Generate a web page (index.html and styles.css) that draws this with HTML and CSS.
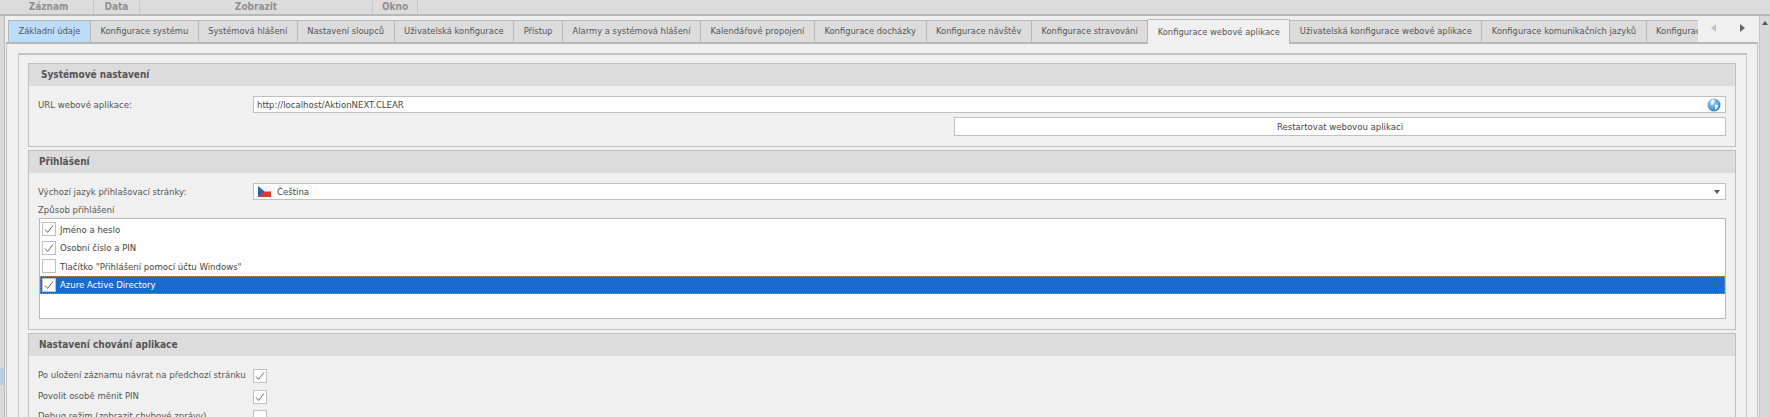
FILE: index.html
```html
<!doctype html>
<html lang="cs">
<head>
  <meta charset="utf-8">
  <title>Konfigurace webové aplikace</title>
  <link rel="stylesheet" href="styles.css">
</head>

<body>

<svg class="defs" width="0" height="0">
  <symbol id="tick" viewBox="0 0 14 14">
    <polyline points="3,7.5 5.6,10.4 11,3.4" fill="none" stroke="#666" stroke-width="1"/>
  </symbol>
  <radialGradient id="sphere" cx="40%" cy="30%" r="75%">
    <stop offset="0" stop-color="#a8d8f8"/>
    <stop offset="1" stop-color="#1f78d0"/>
  </radialGradient>
</svg>

<div id="menu">
  <div class="group-name w-record">Záznam</div>
  <div class="group-name w-data">Data</div>
  <div class="group-name w-view">Zobrazit</div>
  <div class="group-name w-window">Okno</div>
</div>

<div id="main">
  <div id="workspace">

    <div id="tabbar">
      <div id="tabs">
        <div class="tab first">Základní údaje</div>
        <div class="tab">Konfigurace systému</div>
        <div class="tab">Systémová hlášení</div>
        <div class="tab">Nastavení sloupců</div>
        <div class="tab">Uživatelská konfigurace</div>
        <div class="tab">Přístup</div>
        <div class="tab">Alarmy a systémová hlášení</div>
        <div class="tab">Kalendářové propojení</div>
        <div class="tab">Konfigurace docházky</div>
        <div class="tab">Konfigurace návštěv</div>
        <div class="tab">Konfigurace stravování</div>
        <div class="tab active">Konfigurace webové aplikace</div>
        <div class="tab">Uživatelská konfigurace webové aplikace</div>
        <div class="tab">Konfigurace komunikačních jazyků</div>
        <div class="tab">Konfigurace</div>
      </div>
      <div id="tabnav">
        <span class="nav-left"></span>
        <span class="nav-right"></span>
      </div>
    </div>

    <div id="pane">
      <div id="inner">

        <div class="section">
          <h3 class="section-title">Systémové nastavení</h3>
          <div class="section-body">
            <div class="field">
              <span class="label">URL webové aplikace:</span>
              <div class="input">
                <span>http://localhost/AktionNEXT.CLEAR</span>
                <svg class="globe" width="14" height="14" viewBox="0 0 14 14">
                  <circle cx="7" cy="7" r="6.5" fill="url(#sphere)"/>
                  <path d="M6 1.2 C8 1.6 8.4 3 7 4 C6 4.8 6.8 6 5.6 6.8 C4.6 7.4 3.6 6 3.6 4.4 C3.6 3 4.6 1.8 6 1.2 Z" fill="#e8f5fd"/>
                  <path d="M9 6.6 C10.6 6.4 11.6 7.4 10.8 9 C10.2 10.4 8.8 12 8 11.6 C7.6 10.4 8.6 9.6 8 8.4 C7.8 7.6 8.2 6.8 9 6.6 Z" fill="#e8f5fd"/>
                </svg>
              </div>
            </div>
            <div class="actions">
              <div class="button">Restartovat webovou aplikaci</div>
            </div>
          </div>
        </div>

        <div class="section">
          <h3 class="section-title">Přihlášení</h3>
          <div class="section-body">
            <div class="field">
              <span class="label">Výchozí jazyk přihlašovací stránky:</span>
              <div class="input">
                <svg class="flag" width="13" height="11" viewBox="0 0 13 11">
                  <rect width="13" height="5.5" fill="#f4f4f8"/>
                  <rect y="5.5" width="13" height="5.5" fill="#e2382c"/>
                  <polygon points="0,0 6.5,5.5 0,11" fill="#2a62b4"/>
                </svg>
                <span class="combo-text">Čeština</span>
                <span class="combo-arrow"></span>
              </div>
            </div>
            <div class="list-label">Způsob přihlášení</div>
            <div class="list">
              <div class="list-row"><span class="check"><svg width="14" height="14"><use href="#tick"/></svg></span>Jméno a heslo</div>
              <div class="list-row"><span class="check"><svg width="14" height="14"><use href="#tick"/></svg></span>Osobní číslo a PIN</div>
              <div class="list-row"><span class="check"></span>Tlačítko "Přihlášení pomocí účtu Windows"</div>
              <div class="list-row selected"><span class="check"><svg width="14" height="14"><use href="#tick"/></svg></span>Azure Active Directory</div>
            </div>
          </div>
        </div>

        <div class="section">
          <h3 class="section-title">Nastavení chování aplikace</h3>
          <div class="section-body options">
            <div class="field option"><span class="label">Po uložení záznamu návrat na předchozí stránku</span><span class="check"><svg width="14" height="14"><use href="#tick"/></svg></span></div>
            <div class="field option"><span class="label">Povolit osobě měnit PIN</span><span class="check"><svg width="14" height="14"><use href="#tick"/></svg></span></div>
            <div class="field option"><span class="label">Debug režim (zobrazit chybové zprávy)</span><span class="check"></span></div>
          </div>
        </div>

      </div><!-- /#inner -->
    </div>

  </div><!-- /#workspace -->

  <div id="scrollbar"><span class="scroll-up"></span></div>
</div>

<div id="side-mark"></div>

</body>
</html>
```

FILE: styles.css
```css
html {
  box-sizing: border-box;
}
*, *:before, *:after {
  box-sizing: inherit;
}

body {
  margin: 0;
  padding: 0;
  height: 417px;
  overflow: hidden;
  background-color: #dadada;
  font-family: 'DejaVu Sans', sans-serif;
  font-stretch: condensed;
  font-size: 9.5px;
  color: #555;
}

.defs {
  position: absolute;
}

/* top ribbon captions */

#menu {
  display: flex;
  height: 16px;
  padding-left: 4px;
  background-color: #dcdcdc;
  border-bottom: 2px solid #b8b8b8;
}

.group-name {
  height: 14px;
  line-height: 13px;
  text-align: center;
  font-size: 10px;
  font-weight: 700;
  color: #909090;
  border-right: 1px solid #c8c8c8;
}

.w-record { width: 90px; }
.w-data { width: 46px; }
.w-view { width: 233px; }
.w-window { width: 45px; }

#main {
  display: flex;
  height: 401px;
}

#workspace {
  width: 1756px;
  margin-left: 4px;
  border-left: 1px solid #bcbcbc;
  border-right: 1px solid #c4c4c4;
  background-color: #f0f0f0;
  display: flex;
  flex-direction: column;
}

/* tabs */

#tabbar {
  display: flex;
  height: 28px;
  flex-shrink: 0;
  margin-left: 1px;
  margin-right: 1px;
}

#tabs {
  display: flex;
  align-items: flex-end;
  width: 1692px;
  overflow: hidden;
}

#tabs::before {
  content: "";
  flex-shrink: 0;
  width: 2px;
  height: 2px;
  background-color: #b8b8b8;
}

.tab {
  flex-shrink: 0;
  height: 24px;
  line-height: 20px;
  padding: 0 9.5px;
  font-size: 9.3px;
  white-space: nowrap;
  background-color: #dcdcdc;
  border: 1px solid #b8b8b8;
  border-left: 0;
  border-bottom-width: 2px;
}

.tab.first {
  background-color: #bcdcfa;
  border-left: 1px solid #b8b8b8;
}

.tab.active {
  height: 25px;
  line-height: 23px;
  background-color: #f0f0f0;
  border-bottom: 0;
}

#tabnav {
  display: flex;
  flex: 1;
  align-items: center;
  padding-left: 13px;
  padding-bottom: 2px;
  gap: 24px;
  border-bottom: 2px solid #b8b8b8;
}

.nav-left {
  border: 4px solid transparent;
  border-left: 0;
  border-right: 5px solid #c4c4c4;
}

.nav-right {
  border: 4px solid transparent;
  border-right: 0;
  border-left: 5px solid #666;
}

/* panes */

#pane {
  flex: 1;
  min-height: 0;
  margin-left: 1px;
  margin-right: 1px;
  padding: 9px 10px 0 11px;
  border-left: 1px solid #c4c4c4;
  border-right: 1px solid #c4c4c4;
}

#inner {
  height: 100%;
  padding: 8px 10px 0 9px;
  border-top: 2px solid #c4c4c4;
  border-left: 1px solid #c8c8c8;
  border-right: 1px solid #c8c8c8;
  display: flex;
  flex-direction: column;
  gap: 3px;
}

.section {
  flex-shrink: 0;
  border: 1px solid #c0c0c0;
}

.section-title {
  margin: 0;
  height: 22px;
  line-height: 22px;
  padding-left: 10px;
  font-size: 10px;
  font-weight: 700;
  color: #555;
  background-color: #dcdcdc;
}

.section:first-child .section-title {
  padding-left: 12px;
}

.section-body {
  padding: 10px 9px 10px 9px;
}

.field {
  display: grid;
  grid-template-columns: 215px 1fr;
  align-items: center;
}

.label {
  white-space: nowrap;
}

.input {
  display: flex;
  align-items: center;
  height: 17px;
  padding: 0 3px;
  color: #444;
  background-color: #fff;
  border: 1px solid #c0c0c0;
}

.globe {
  margin-left: auto;
  margin-right: 1px;
}

.flag {
  margin-left: 1px;
}

.combo-text {
  margin-left: 6px;
}

.combo-arrow {
  margin-left: auto;
  margin-right: 2px;
  border: 3px solid transparent;
  border-top: 4px solid #555;
  border-bottom: 0;
}

.actions {
  display: flex;
  justify-content: flex-end;
  margin-top: 4px;
}

.button {
  width: 772px;
  height: 19px;
  line-height: 17px;
  text-align: center;
  color: #444;
  background-color: #fff;
  border: 1px solid #c0c0c0;
}

.list-label {
  margin-top: 2px;
  height: 15px;
  line-height: 15px;
}

.list {
  height: 101px;
  margin-top: 1px;
  margin-left: 1px;
  padding-top: 1px;
  background-color: #fff;
  border: 1px solid #b8b8b8;
}

.list-row {
  display: flex;
  align-items: center;
  height: 18.5px;
  color: #444;
}

.list-row .check {
  margin-left: 2px;
  margin-right: 4px;
}

.list-row.selected {
  color: #fff;
  background-color: #1a6bd0;
  outline: 1px dotted #b09060;
  outline-offset: -1px;
}

.check {
  display: block;
  flex-shrink: 0;
  width: 14px;
  height: 14px;
  background-color: #fff;
  border: 1px solid #c0c0c0;
}

.check svg {
  display: block;
  margin: -1px;
}

.options {
  padding-top: 13px;
}

.option {
  height: 20.5px;
  align-items: flex-start;
}

/* scroll */

#scrollbar {
  flex: 1;
  background-color: #d8d8d8;
  display: flex;
  justify-content: center;
}

.scroll-up {
  margin-top: 5px;
  height: 0;
  border: 3px solid transparent;
  border-top: 0;
  border-bottom: 4px solid #555;
}

#side-mark {
  position: absolute;
  left: 0;
  top: 368px;
  width: 4px;
  height: 17px;
  background-color: #b4cfe8;
}
```
